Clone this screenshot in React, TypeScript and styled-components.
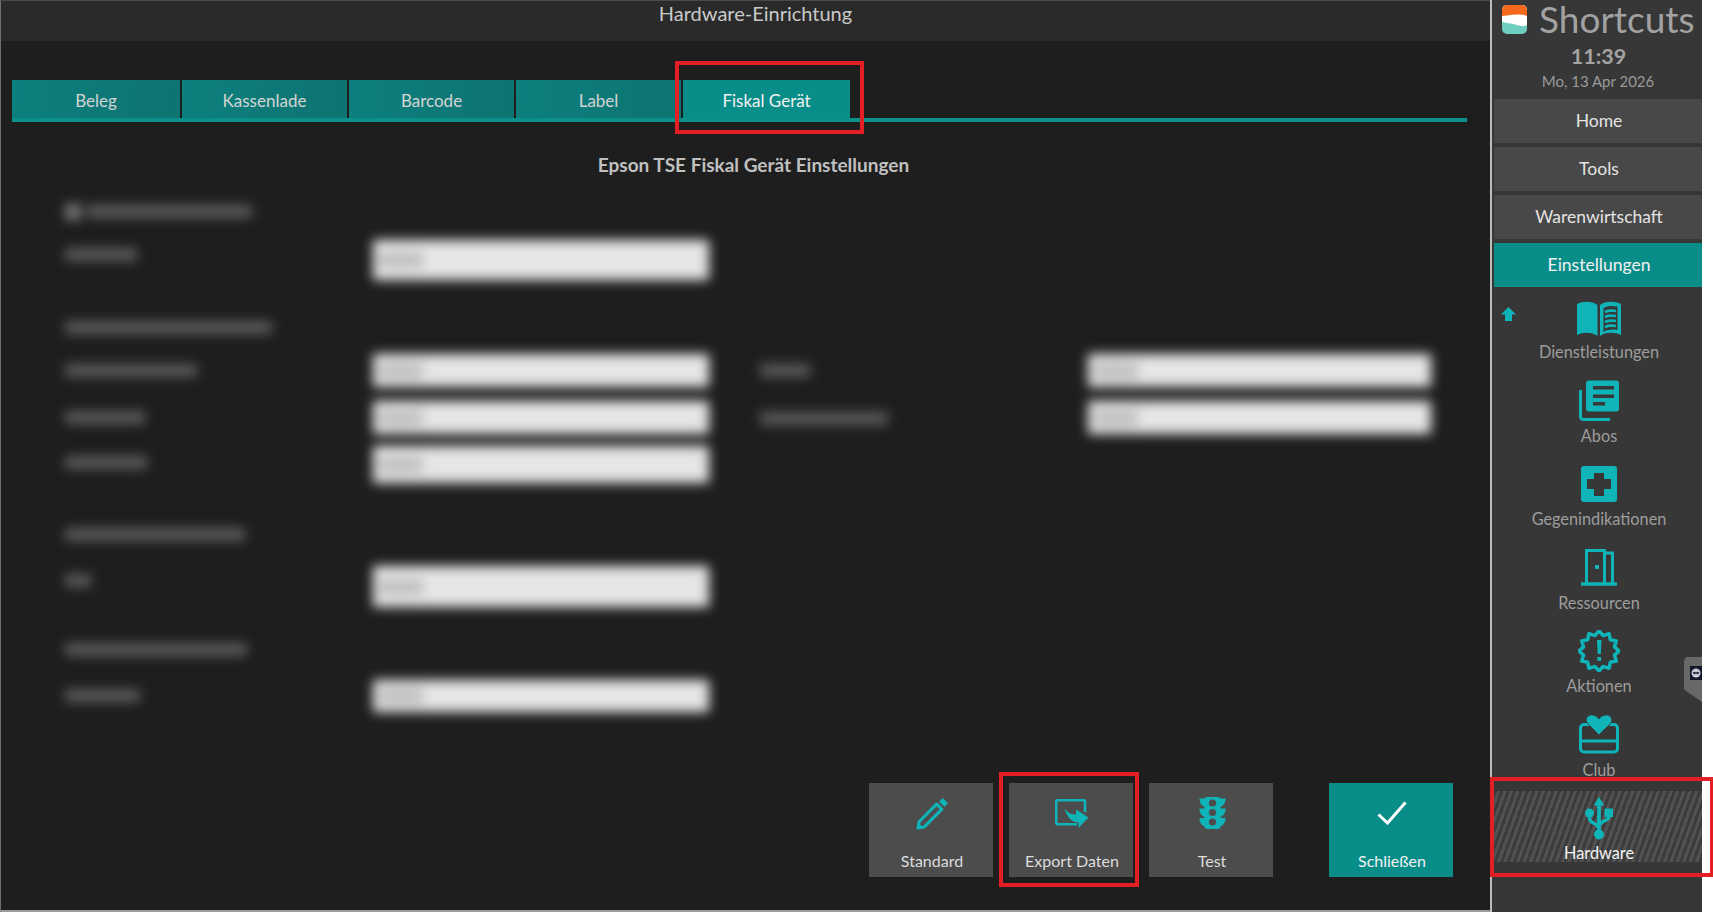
import React from 'react';
import styled, { createGlobalStyle } from 'styled-components';

const TEAL = '#0fb4b8';
const SIDE_BG = '#373737';

const GlobalStyle = createGlobalStyle`
  html, body {
    margin: 0;
    padding: 0;
    background: #fff;
    font-family: 'Lato', 'Open Sans', sans-serif;
    overflow: hidden;
  }
  * { box-sizing: border-box; }
`;

const burst = Array.from({ length: 24 }, (_, i) => {
  const r = i % 2 === 0 ? 20 : 16;
  const a = (i * Math.PI) / 12 - Math.PI / 2;
  return `${(21 + r * Math.cos(a)).toFixed(2)},${(21 + r * Math.sin(a)).toFixed(2)}`;
}).join(' ');

const BookIcon = () => (
  <svg width="44" height="38" viewBox="0 -4 44 38">
    <path fill={TEAL} d="M0 2C6 -1 15 -1 20.500 3V34C15 30 6 30 0 33Z" />
    <path fill={TEAL} d="M23 3C28 -1 38 -1 44 2V33C38 30 28 30 23 34Z" />
    <path fill={SIDE_BG} d="M26.500 6C30 3.500 36 3.500 40.500 4.500V28C36 27 30 27.500 26.500 30Z" />
    <g fill="none" stroke={TEAL} strokeWidth="2.700">
      <path d="M28 10C31 8.500 35 8.500 39 9" />
      <path d="M28 15C31 13.500 35 13.500 39 14" />
      <path d="M28 20C31 18.500 35 18.500 39 19" />
      <path d="M28 25C31 23.500 35 23.500 39 24" />
    </g>
  </svg>
);

const PagesIcon = () => (
  <svg width="40" height="41" viewBox="0 0 40 41">
    <rect x="7" y="0.500" width="33" height="31" rx="3" fill={TEAL} />
    <path d="M1.500 10V36.500A3 3 0 0 0 4.500 39.500H31" fill="none" stroke={TEAL} strokeWidth="3" />
    <rect x="14" y="6" width="21" height="3.500" fill={SIDE_BG} />
    <rect x="14" y="14.500" width="21" height="3.500" fill={SIDE_BG} />
    <rect x="14" y="22" width="12" height="3.500" fill={SIDE_BG} />
  </svg>
);

const CrossIcon = () => (
  <svg width="36" height="36" viewBox="0 0 36 36">
    <rect width="36" height="36" rx="3" fill={TEAL} />
    <path fill={SIDE_BG} d="M13 7H23V13H30V23H23V30H13V23H6V13H13Z" />
  </svg>
);

const DoorIcon = () => (
  <svg width="36" height="37" viewBox="0 0 36 37">
    <path d="M0 35H36" stroke={TEAL} strokeWidth="3.500" />
    <path d="M5.500 34V1.500H23.500V34" fill="none" stroke={TEAL} strokeWidth="3" />
    <path d="M23.500 4H31.500V34" fill="none" stroke={TEAL} strokeWidth="3" />
    <rect x="14" y="16" width="4" height="4" fill={TEAL} />
  </svg>
);

const BurstIcon = () => (
  <svg width="42" height="42" viewBox="0 0 42 42">
    <polygon points={burst} fill="none" stroke={TEAL} strokeWidth="3.500" strokeLinejoin="round" />
    <path d="M19 10H23.500L22.800 24H19.700Z" fill={TEAL} />
    <rect x="19.300" y="27" width="3.800" height="3.800" fill={TEAL} />
  </svg>
);

const ClubIcon = () => (
  <svg width="40" height="39" viewBox="0 0 40 39">
    <rect x="1.500" y="9.500" width="37" height="27.500" rx="3.500" fill="none" stroke={TEAL} strokeWidth="3" />
    <path d="M1.500 26H38.500" stroke={TEAL} strokeWidth="3" />
    <path
      d="M20 20L8.500 8.500C4.500 3.500 9.500 -1 14 0C17 0.500 19 2 20 4C21 2 23 0.500 26 0C30.500 -1 35.500 3.500 31.500 8.500Z"
      fill={TEAL}
      stroke={SIDE_BG}
      strokeWidth="1"
    />
  </svg>
);

const UsbIcon = () => (
  <svg width="28" height="45" viewBox="0 -2 28 45">
    <path d="M14 0L8.500 8.500H19.500Z" fill={TEAL} />
    <path d="M14 8V36" stroke={TEAL} strokeWidth="3.800" />
    <circle cx="14" cy="37.500" r="5" fill={TEAL} />
    <circle cx="4.500" cy="16" r="4.500" fill={TEAL} />
    <rect x="19.500" y="11.500" width="8.500" height="8.500" fill={TEAL} />
    <path d="M4.500 19V22C4.500 26 13 26 13 31" fill="none" stroke={TEAL} strokeWidth="3.400" />
    <path d="M23.700 19V20C23.700 24 15 24 15 28" fill="none" stroke={TEAL} strokeWidth="3.400" />
  </svg>
);

const PencilIcon = () => (
  <svg width="33" height="33" viewBox="0 0 32 32">
    <path d="M3 24L20 7L25 12L8 29L2 30Z" fill="none" stroke={TEAL} strokeWidth="3" strokeLinejoin="round" />
    <path d="M1 31L2.500 25L7 29.500Z" fill={TEAL} />
    <path d="M22.500 4.500L26 1L31 6L27.500 9.500Z" fill={TEAL} />
  </svg>
);

const ExportIcon = () => (
  <svg width="34" height="29" viewBox="0 0 34 29">
    <path d="M30 13V2.500A1.300 1.300 0 0 0 28.700 1.200H2.500A1.300 1.300 0 0 0 1.200 2.500V24A1.300 1.300 0 0 0 2.500 25.200H22" fill="none" stroke={TEAL} strokeWidth="2.600" />
    <path d="M9.500 9C12 13.500 16 15.500 21 15.500V10.500L33.500 18.500L23.500 29V23.500C17 23.500 11.500 18 9.500 9Z" fill={TEAL} />
  </svg>
);

const LightIcon = () => (
  <svg width="27" height="32" viewBox="0 0 27 32">
    <rect x="5.500" y="0" width="16" height="32" rx="3" fill={TEAL} />
    <path d="M6 1.500H0.500C0.500 6 2.500 9 6 10Z" fill={TEAL} />
    <path d="M21 1.500H26.500C26.500 6 24.500 9 21 10Z" fill={TEAL} />
    <path d="M6 11.500H0.500C0.500 16 2.500 19 6 20Z" fill={TEAL} />
    <path d="M21 11.500H26.500C26.500 16 24.500 19 21 20Z" fill={TEAL} />
    <path d="M6 21H0.500C0.500 25.500 2.500 28.500 6 29.500Z" fill={TEAL} />
    <path d="M21 21H26.500C26.500 25.500 24.500 28.500 21 29.500Z" fill={TEAL} />
    <circle cx="13.500" cy="6" r="3.600" fill="#4c4c4c" />
    <circle cx="13.500" cy="15.500" r="3.600" fill="#4c4c4c" />
    <circle cx="13.500" cy="25" r="3.600" fill="#4c4c4c" />
  </svg>
);

const CheckIcon = () => (
  <svg width="30" height="24" viewBox="0 0 30 24">
    <path d="M1.500 13.500L10.500 22L28.500 1.500" fill="none" stroke="#fff" strokeWidth="3" />
  </svg>
);

const LogoIcon = () => (
  <svg width="25" height="29" viewBox="0 0 25 29">
    <defs>
      <clipPath id="logo-clip">
        <rect width="25" height="29" rx="5" />
      </clipPath>
    </defs>
    <g clipPath="url(#logo-clip)">
      <rect width="25" height="29" fill="#6ecfc0" />
      <path d="M0 0H25V19C25 22 20 21.500 15 20C9 18 4 18 0 17Z" fill="#fff" />
      <path d="M0 0H25V12C25 10 20 9.500 15 9.500C9 9.500 4 11 0 11Z" fill="#f5691c" />
    </g>
  </svg>
);

const items = [
  { label: 'Dienstleistungen', icon: <BookIcon /> },
  { label: 'Abos', icon: <PagesIcon /> },
  { label: 'Gegenindikationen', icon: <CrossIcon /> },
  { label: 'Ressourcen', icon: <DoorIcon /> },
  { label: 'Aktionen', icon: <BurstIcon /> },
  { label: 'Club', icon: <ClubIcon /> },
];

export default function App() {
  return (
    <>
      <GlobalStyle />
      <Screen>
        <Main>
          <TitleBar>Hardware-Einrichtung</TitleBar>
          <TabBar>
            <Tab>Beleg</Tab>
            <Tab>Kassenlade</Tab>
            <Tab>Barcode</Tab>
            <Tab>Label</Tab>
            <Tab $active>
              Fiskal Gerät
              <TabMark />
            </Tab>
          </TabBar>
          <FormTitle>Epson TSE Fiskal Gerät Einstellungen</FormTitle>
          <BlurredForm>
            <Row $top={0} $height={24}>
              <CheckBlob />
              <Smear $width={165} />
            </Row>
            <Row $top={18} $height={40}>
              <LabelCell><Smear $width={72} $offset={8} /></LabelCell>
              <FieldBar><FieldValue /></FieldBar>
            </Row>
            <Row $top={34} $height={24}>
              <Smear $width={207} />
            </Row>
            <Row $top={16} $height={33}>
              <LabelCell><Smear $width={132} $offset={10} /></LabelCell>
              <FieldBar><FieldValue /></FieldBar>
              <RightCell>
                <Smear $width={50} $offset={10} />
                <RightField><FieldValue /></RightField>
              </RightCell>
            </Row>
            <Row $top={14} $height={33}>
              <LabelCell><Smear $width={80} $offset={10} /></LabelCell>
              <FieldBar><FieldValue /></FieldBar>
              <RightCell>
                <Smear $width={128} $offset={11} />
                <RightField><FieldValue /></RightField>
              </RightCell>
            </Row>
            <Row $top={12} $height={37}>
              <LabelCell><Smear $width={82} $offset={10} /></LabelCell>
              <FieldBar><FieldValue /></FieldBar>
            </Row>
            <Row $top={38} $height={24}>
              <Smear $width={180} />
            </Row>
            <Row $top={21} $height={41}>
              <LabelCell><Smear $width={26} $offset={8} /></LabelCell>
              <FieldBar><FieldValue /></FieldBar>
            </Row>
            <Row $top={29} $height={24}>
              <Smear $width={182} />
            </Row>
            <Row $top={20} $height={32}>
              <LabelCell><Smear $width={75} $offset={9} /></LabelCell>
              <FieldBar><FieldValue /></FieldBar>
            </Row>
          </BlurredForm>
          <Footer>
            <ActionButton>
              <ActionIcon><PencilIcon /></ActionIcon>
              Standard
            </ActionButton>
            <ActionButton>
              <ActionIcon><ExportIcon /></ActionIcon>
              Export Daten
              <ButtonMark />
            </ActionButton>
            <ActionButton>
              <ActionIcon><LightIcon /></ActionIcon>
              Test
            </ActionButton>
            <ActionButton $primary>
              <ActionIcon><CheckIcon /></ActionIcon>
              Schließen
            </ActionButton>
          </Footer>
        </Main>

        <Sidebar>
          <Brand>
            <LogoIcon />
            <BrandName>Shortcuts</BrandName>
          </Brand>
          <ClockTime>11:39</ClockTime>
          <ClockDate>Mo, 13 Apr 2026</ClockDate>
          <NavList>
            <NavButton>Home</NavButton>
            <NavButton>Tools</NavButton>
            <NavButton>Warenwirtschaft</NavButton>
            <NavButton $active>Einstellungen</NavButton>
          </NavList>
          <ShortcutList>
            {items.map((item, index) => (
              <Shortcut key={item.label}>
                {index === 0 && (
                  <UpArrow width="15" height="14" viewBox="0 0 15 14">
                    <path d="M7.500 0L15 7.500H11V14H4V7.500H0Z" fill={TEAL} />
                  </UpArrow>
                )}
                <ShortcutIcon>{item.icon}</ShortcutIcon>
                <ShortcutLabel>{item.label}</ShortcutLabel>
              </Shortcut>
            ))}
            <Shortcut $selected>
              <ShortcutIcon><UsbIcon /></ShortcutIcon>
              <ShortcutLabel $selected>Hardware</ShortcutLabel>
              <SideMark />
            </Shortcut>
          </ShortcutList>
          <RemoteTab>
            <RemoteBadge>
              <svg width="10" height="10" viewBox="0 0 10 10">
                <circle cx="5" cy="5" r="4.500" fill="#c8ccd8" />
                <path d="M1.500 5L3.500 3.500V4.300H6.500V3.500L8.500 5L6.500 6.500V5.700H3.500V6.500Z" fill="#1b1d2c" />
              </svg>
            </RemoteBadge>
          </RemoteTab>
        </Sidebar>
      </Screen>
    </>
  );
}

const Screen = styled.div`
  display: flex;
  width: 1713px;
  height: 912px;
  background: #fff;
  overflow: hidden;
`;

const Main = styled.main`
  display: flex;
  flex-direction: column;
  width: 1490px;
  height: 912px;
  background: #1e1e1e;
  border-left: 1px solid #6f6f6f;
  border-top: 1px solid #4a4a4a;
  border-bottom: 2px solid #9c9c9c;
`;

const TitleBar = styled.header`
  height: 40px;
  padding-left: 20px;
  background: #2a2a2a;
  color: #c9c9c9;
  font-size: 20px;
  line-height: 24px;
  text-align: center;
`;

const TabBar = styled.nav`
  display: flex;
  margin: 39px 23px 0 11px;
  border-bottom: 4px solid #0a8f8b;
`;

const Tab = styled.div<{ $active?: boolean }>`
  position: relative;
  width: 167px;
  height: 38px;
  margin-bottom: ${(p) => (p.$active ? '-4px' : '0')};
  padding-top: 3px;
  background: ${(p) => (p.$active ? '#098d89' : 'linear-gradient(100deg, #0c807e, #0e7371)')};
  border-right: ${(p) => (p.$active ? 'none' : '2px solid #1e1e1e')};
  color: ${(p) => (p.$active ? '#f2f2f2' : '#d4d4d4')};
  font-size: 17px;
  line-height: 36px;
  text-align: center;
  &:first-child {
    width: 170px;
  }
`;

const TabMark = styled.span`
  position: absolute;
  top: -19px;
  left: -8px;
  width: 189px;
  height: 73px;
  border: 4px solid #e31e24;
`;

const FormTitle = styled.h2`
  margin: 30px 0 0;
  padding-left: 16px;
  color: #c0c0c0;
  font-size: 19px;
  font-weight: 700;
  line-height: 26px;
  text-align: center;
`;

const BlurredForm = styled.section`
  margin-top: 20px;
  padding-left: 64px;
  filter: blur(6px);
`;

const Row = styled.div<{ $top: number; $height: number }>`
  display: flex;
  align-items: center;
  height: ${(p) => p.$height}px;
  margin-top: ${(p) => p.$top}px;
`;

const LabelCell = styled.div`
  width: 308px;
  height: 100%;
`;

const Smear = styled.div<{ $width: number; $offset?: number }>`
  width: ${(p) => p.$width}px;
  height: 13px;
  margin-top: ${(p) => p.$offset ?? 3}px;
  background: #5a5a5a;
`;

const CheckBlob = styled.div`
  width: 16px;
  height: 16px;
  margin: 3px 6px 0 0;
  background: #767676;
`;

const FieldBar = styled.div`
  display: flex;
  align-items: center;
  width: 336px;
  height: 100%;
  padding-left: 6px;
  background: #e6e6e6;
`;

const FieldValue = styled.div`
  width: 44px;
  height: 16px;
  background: #c0c0c0;
`;

const RightCell = styled.div`
  display: flex;
  justify-content: space-between;
  width: 671px;
  height: 100%;
  margin-left: 51px;
`;

const RightField = styled(FieldBar)`
  width: 343px;
`;

const Footer = styled.footer`
  display: flex;
  justify-content: flex-end;
  gap: 16px;
  margin-top: auto;
  padding: 0 37px 33px 0;
`;

const ActionButton = styled.button<{ $primary?: boolean }>`
  position: relative;
  display: flex;
  flex-direction: column;
  align-items: center;
  width: 124px;
  height: 94px;
  margin-left: ${(p) => (p.$primary ? '40px' : '0')};
  padding: 0 0 0 2px;
  border: none;
  background: ${(p) => (p.$primary ? '#098d89' : '#4c4c4c')};
  color: ${(p) => (p.$primary ? '#f2f2f2' : '#dcdcdc')};
  font-family: 'Lato', sans-serif;
  font-size: 16px;
  line-height: 20px;
`;

const ActionIcon = styled.span`
  display: flex;
  align-items: center;
  justify-content: center;
  height: 60px;
  margin-bottom: 8px;
`;

const ButtonMark = styled.span`
  position: absolute;
  top: -11px;
  left: -10px;
  width: 140px;
  height: 115px;
  border: 4px solid #e31e24;
`;

const Sidebar = styled.aside`
  position: relative;
  display: flex;
  flex-direction: column;
  width: 212px;
  height: 912px;
  background: ${SIDE_BG};
  border-left: 2px solid #bdbdbd;
`;

const Brand = styled.div`
  display: flex;
  align-items: center;
  gap: 12px;
  height: 38px;
  margin-bottom: -2px;
  padding-left: 10px;
`;

const BrandName = styled.span`
  color: #a2a2a2;
  font-size: 37px;
  line-height: 36px;
`;

const ClockTime = styled.div`
  margin-top: 8px;
  padding-left: 3px;
  color: #a4a4a4;
  font-size: 21.5px;
  font-weight: 700;
  line-height: 24px;
  text-align: center;
`;

const ClockDate = styled.div`
  margin-top: 3px;
  padding-left: 2px;
  color: #9a9a9a;
  font-size: 15px;
  line-height: 20px;
  text-align: center;
`;

const NavList = styled.div`
  display: flex;
  flex-direction: column;
  gap: 4px;
  margin: 8px 0 0 2px;
`;

const NavButton = styled.div<{ $active?: boolean }>`
  height: 44px;
  padding-left: 2px;
  background: ${(p) => (p.$active ? '#098d89' : '#484848')};
  color: ${(p) => (p.$active ? '#f2f2f2' : '#e4e4e4')};
  font-size: 17.5px;
  line-height: 43px;
  text-align: center;
`;

const ShortcutList = styled.div`
  display: flex;
  flex-direction: column;
  gap: 12.5px;
  margin: 3px 0 0 2px;
`;

const Shortcut = styled.div<{ $selected?: boolean }>`
  position: relative;
  display: flex;
  flex-direction: column;
  align-items: center;
  height: 71px;
  padding-left: 2px;
  background: ${(p) =>
    p.$selected
      ? 'repeating-linear-gradient(110deg, #3c3c3c 0 3px, #515151 3px 6px)'
      : 'transparent'};
`;

const ShortcutIcon = styled.div`
  display: flex;
  align-items: center;
  justify-content: center;
  height: 57px;
`;

const ShortcutLabel = styled.div<{ $selected?: boolean }>`
  color: ${(p) => (p.$selected ? '#f2f2f2' : '#9d9d9d')};
  font-size: 16.3px;
  line-height: 18px;
`;

const UpArrow = styled.svg`
  position: absolute;
  top: 17px;
  left: 7px;
`;

const SideMark = styled.span`
  position: absolute;
  top: -14px;
  left: -4px;
  width: 223px;
  height: 100px;
  border: 4px solid #e31e24;
  border-right-width: 3px;
  box-shadow: inset -8px 0 0 #fff;
`;

const RemoteTab = styled.div`
  position: absolute;
  top: 657px;
  right: 0;
  width: 18px;
  height: 45px;
  padding: 9px 0 0 6px;
  background: #686868;
  clip-path: polygon(12% 0, 100% 0, 100% 100%, 0 72%, 0 8%);
`;

const RemoteBadge = styled.div`
  display: flex;
  align-items: center;
  justify-content: center;
  width: 12px;
  height: 14px;
  background: #14162a;
`;
